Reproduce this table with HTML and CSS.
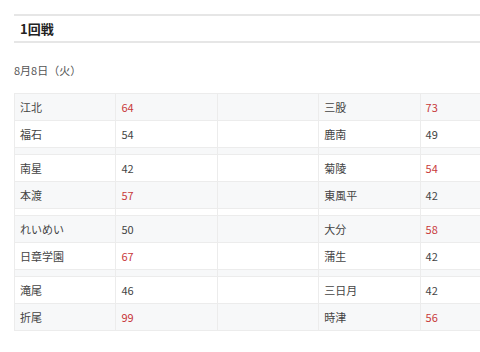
FILE: index.html
```html
<!DOCTYPE html>
<html lang="ja">
<head>
<meta charset="utf-8">
<link rel="stylesheet" href="styles.css">
</head>
<body>
<div class="page">
  <div class="round-head"><h2 class="round-title">1回戦</h2></div>
  <p class="date">8月8日（火）</p>
  <table class="results">
    <colgroup><col><col><col><col><col></colgroup>
    <tbody>
      <tr><td>江北</td><td class="win">64</td><td></td><td>三股</td><td class="win">73</td></tr>
      <tr><td>福石</td><td>54</td><td></td><td>鹿南</td><td>49</td></tr>
      <tr class="gap"><td></td><td></td><td></td><td></td><td></td></tr>
      <tr><td>南星</td><td>42</td><td></td><td>菊陵</td><td class="win">54</td></tr>
      <tr><td>本渡</td><td class="win">57</td><td></td><td>東風平</td><td>42</td></tr>
      <tr class="gap"><td></td><td></td><td></td><td></td><td></td></tr>
      <tr><td>れいめい</td><td>50</td><td></td><td>大分</td><td class="win">58</td></tr>
      <tr><td>日章学園</td><td class="win">67</td><td></td><td>蒲生</td><td>42</td></tr>
      <tr class="gap"><td></td><td></td><td></td><td></td><td></td></tr>
      <tr><td>滝尾</td><td>46</td><td></td><td>三日月</td><td>42</td></tr>
      <tr><td>折尾</td><td class="win">99</td><td></td><td>時津</td><td class="win">56</td></tr>
    </tbody>
  </table>
</div>
</body>
</html>
```

FILE: styles.css
```css
html, body {
  margin: 0;
  padding: 0;
  overflow: hidden;
  background: #fff;
}
body {
  font-family: "Noto Sans CJK JP", "Noto Sans", sans-serif;
  color: #444;
}
.page {
  padding: 14px 0 0 14px;
  width: 540px;
}
.round-head {
  border-top: 2px solid #e6e6e6;
  border-bottom: 2px solid #e6e6e6;
  height: 25px;
  display: flex;
  align-items: center;
}
.round-title {
  margin: 0;
  padding-left: 6px;
  font-size: 13px;
  font-weight: bold;
  color: #222;
  line-height: 25px;
}
.date {
  margin: 19px 0 0 0;
  font-size: 11px;
  line-height: 16px;
  color: #555;
}
.results {
  margin-top: 15px;
  width: 508px;
  table-layout: fixed;
  border-collapse: collapse;
  font-size: 11px;
}
.results col {
  width: 20%;
}
.results td {
  border: 1px solid #ececec;
  height: 26px;
  padding: 0 0 0 5px;
  line-height: 14px;
  color: #444;
  vertical-align: middle;
}
.results tr:nth-child(odd) td {
  background: #f7f8f9;
}
.results tr.gap td {
  height: 6px;
  padding: 0;
}
.results td.win {
  color: #c8383a;
}
```
